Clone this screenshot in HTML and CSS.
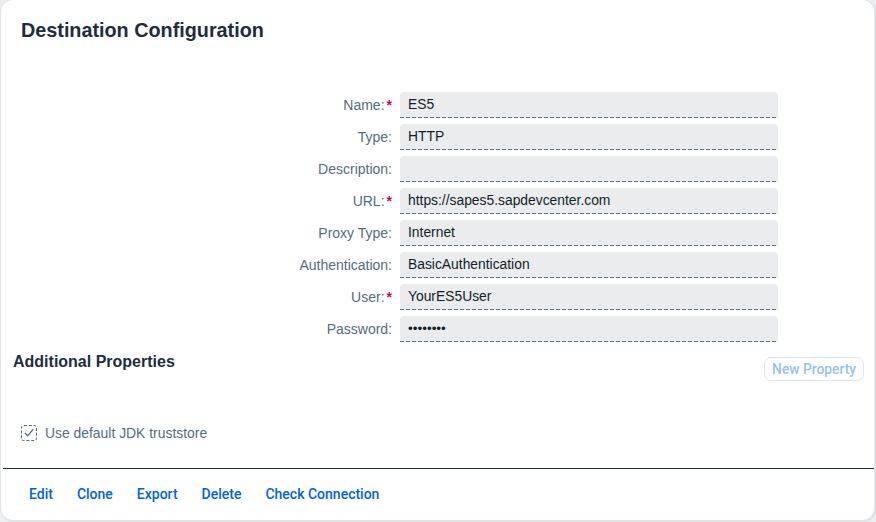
FILE: index.html
```html
<!DOCTYPE html>
<html>
<head>
<meta charset="utf-8">
<link rel="stylesheet" href="styles.css">
</head>
<body>
<div class="card">
  <header class="card-header">
    <h1 class="title">Destination Configuration</h1>
  </header>
  <div class="form">
    <label class="label">Name:<span class="req">*</span></label><div class="field">ES5</div>
    <label class="label">Type:</label><div class="field">HTTP</div>
    <label class="label">Description:</label><div class="field"></div>
    <label class="label">URL:<span class="req">*</span></label><div class="field">https://sapes5.sapdevcenter.com</div>
    <label class="label">Proxy Type:</label><div class="field">Internet</div>
    <label class="label">Authentication:</label><div class="field">BasicAuthentication</div>
    <label class="label">User:<span class="req">*</span></label><div class="field">YourES5User</div>
    <label class="label">Password:</label><div class="field pwd">&bull;&bull;&bull;&bull;&bull;&bull;&bull;&bull;</div>
  </div>
  <div class="props">
    <h2 class="props-title">Additional Properties</h2>
    <button class="btn-new">New Property</button>
  </div>
  <div class="check-row">
    <span class="checkbox"><svg width="12" height="12" viewBox="0 0 12 12"><path d="M2.2 6.2 L4.8 8.8 L9.8 2.6" fill="none" stroke="#556b82" stroke-width="1.3" stroke-linecap="round" stroke-linejoin="round"/></svg></span>
    <span class="check-label">Use default JDK truststore</span>
  </div>
  <footer class="footer">
    <a class="link">Edit</a>
    <a class="link">Clone</a>
    <a class="link">Export</a>
    <a class="link">Delete</a>
    <a class="link">Check Connection</a>
  </footer>
</div>
</body>
</html>
```
FILE: styles.css
```css
html, body {
  margin: 0;
  padding: 0;
}
body {
  background: #eceef0;
  font-family: "Liberation Sans", Arial, sans-serif;
  width: 876px;
  height: 522px;
  overflow: hidden;
}
.card {
  box-sizing: border-box;
  margin-left: 1px;
  width: 873px;
  height: 520px;
  background: #fff;
  border-radius: 12px;
  box-shadow: 0 0 0 1px #e1e4e8, 1px 1px 3px rgba(0,0,0,0.12);
  display: flex;
  flex-direction: column;
}
.card-header {
  padding: 18px 20px 0;
  height: 60px;
  box-sizing: border-box;
}
.title {
  margin: 0;
  font-size: 19.8px;
  line-height: 24px;
  font-weight: bold;
  color: #1d2d3e;
}
.form {
  margin-top: 32px;
  display: grid;
  grid-template-columns: 391px 378px;
  column-gap: 8px;
  row-gap: 6px;
}
.label {
  text-align: right;
  font-size: 14px;
  line-height: 26px;
  color: #556b82;
  white-space: nowrap;
}
.req {
  color: #ba066c;
  font-weight: bold;
  margin-left: 2px;
}
.field {
  box-sizing: border-box;
  height: 26px;
  background-color: #eaecee;
  background-image: repeating-linear-gradient(to right, #5b7089 0 4px, transparent 4px 6px);
  background-size: 100% 1px;
  background-position: left bottom;
  background-repeat: no-repeat;
  border-radius: 4px 4px 0 0;
  padding: 0 8px;
  font-size: 13.85px;
  line-height: 25px;
  color: #131e29;
}
.pwd {
  font-size: 13.5px;
}
.props {
  margin-top: 10px;
  padding: 0 10px 0 12px;
  display: flex;
  justify-content: space-between;
  align-items: flex-start;
}
.props-title {
  margin: 0;
  font-size: 16px;
  line-height: 20px;
  font-weight: bold;
  color: #1d2d3e;
}
.btn-new {
  margin-top: 5px;
  height: 24px;
  padding: 0 7px;
  border: 1px solid #d9e5f3;
  border-radius: 7px;
  background: #fff;
  color: #96c2f2;
  font-family: Roboto, "Liberation Sans", sans-serif;
  font-size: 13.8px;
  font-weight: 500;
}
.check-row {
  margin-top: 44px;
  padding-left: 20px;
  display: flex;
  align-items: center;
  gap: 8px;
}
.checkbox {
  box-sizing: border-box;
  width: 16px;
  height: 16px;
  border: 1px dashed #556b82;
  border-radius: 3px;
  display: flex;
  align-items: center;
  justify-content: center;
}
.check-label {
  font-size: 13.9px;
  line-height: 16px;
  color: #556b82;
}
.footer {
  margin-top: auto;
  margin-left: 2px;
  height: 52px;
  box-sizing: border-box;
  border-top: 1px solid #1d2d3e;
  display: flex;
  align-items: center;
  gap: 24px;
  padding: 0 0 1px 26px;
}
.link {
  color: #0064d9;
  font-family: Roboto, "Liberation Sans", sans-serif;
  font-size: 14px;
  font-weight: 500;
  cursor: pointer;
}
```
